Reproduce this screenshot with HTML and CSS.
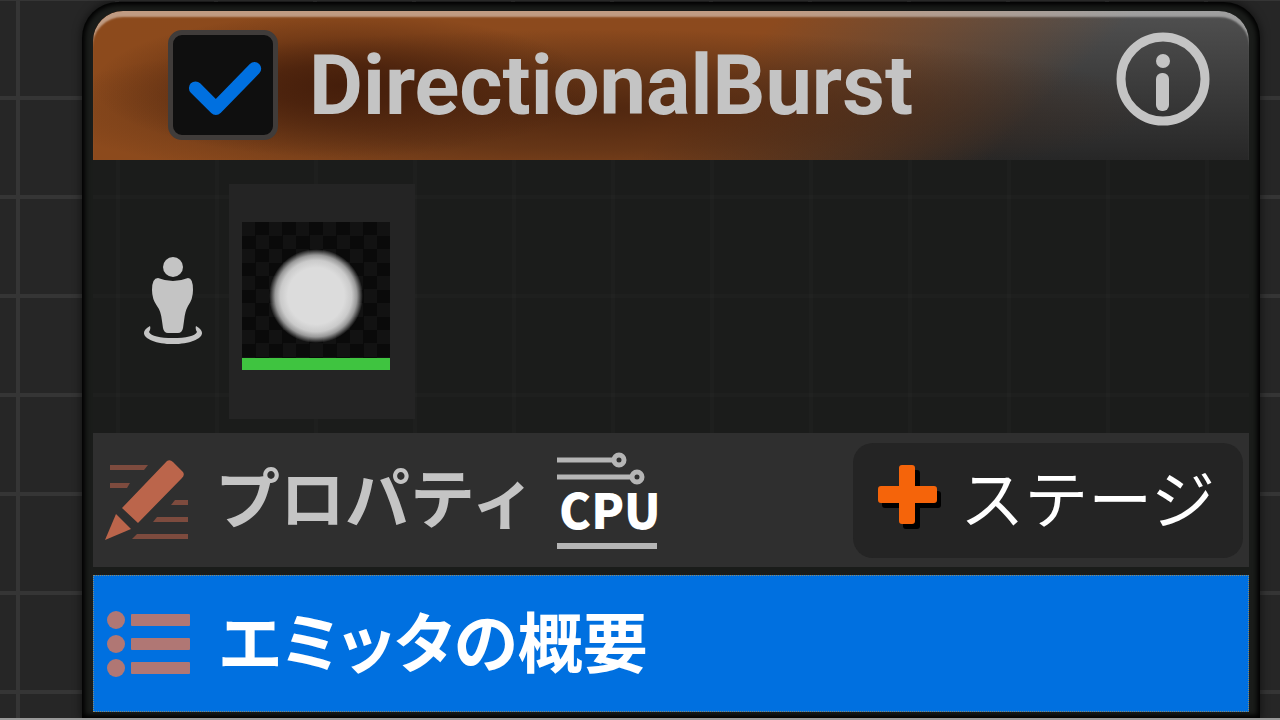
FILE: index.html
```html
<!DOCTYPE html>
<html lang="ja">
<head>
  <meta charset="UTF-8">
  <meta name="viewport" content="width=device-width, initial-scale=1.0">
  <title>DirectionalBurst</title>
  <link rel="stylesheet" href="styles.css">
</head>
<body>
  <main class="node">
    <!-- Emitter header -->
    <header class="node-header">
      <span class="toggle">
        <input type="checkbox" id="emitter-enabled" checked>
        <svg class="check" viewBox="0 0 108 108" aria-hidden="true">
          <path d="M27 57 L47 77 L85 38"/>
        </svg>
      </span>
      <h1><label for="emitter-enabled">DirectionalBurst</label></h1>
      <button class="info" aria-label="情報">
        <svg width="94" height="94" viewBox="0 0 94 94" aria-hidden="true">
          <circle cx="47" cy="47" r="42" fill="none" stroke="#c4c4c4" stroke-width="9"/>
          <circle cx="47" cy="29" r="7" fill="#c4c4c4"/>
          <rect x="40" y="41" width="13" height="38" rx="6" fill="#c4c4c4"/>
        </svg>
      </button>
    </header>

    <!-- Renderer preview -->
    <section class="preview">
      <svg class="person" width="60" height="90" viewBox="0 0 60 90" aria-hidden="true">
        <circle cx="30" cy="11" r="10"/>
        <path d="M15 22 Q30 28 45 22 Q50 22 50 34 Q50 43 45 50 Q42 55 41 65 L40 72 Q39 77 35 77 H25 Q21 77 20 72 L19 65 Q18 55 14 50 Q9 43 9 34 Q9 22 15 22 Z"/>
        <path d="M7 70 C-8 78 7 88 30 88 C53 88 68 78 53 70 Q52 73 54 76 C52 80 43 82 30 82 C17 82 8 80 6 76 Q8 73 7 70 Z"/>
      </svg>
      <div class="thumb-card">
        <div class="thumb">
          <div class="sprite"></div>
        </div>
      </div>
    </section>

    <!-- Properties row -->
    <section class="row properties">
      <svg class="row-icon" width="84" height="84" viewBox="0 0 84 84" aria-hidden="true">
        <g fill="#7d4b3e">
          <path d="M5 7 H43 L39 12 H5 Z"/>
          <path d="M5 25 H25 L22 30 H5 Z"/>
          <path d="M70 42 H83 V47 H66 Z"/>
          <path d="M52 59 H83 V64 H48 Z"/>
          <path d="M32 76 H83 V81 H27 Z"/>
        </g>
        <g fill="#bb654b">
          <path d="M62 3 Q65 1 68 4 L78 14 Q80 17 77 20 L33 65 L17 50 Z"/>
          <path d="M11 56 L26 71 L0 82 Z"/>
        </g>
      </svg>
      <h2>プロパティ</h2>
      <div class="cpu">
        <svg width="100" height="34" viewBox="0 0 100 34" fill="none" stroke="#b5b5b5" stroke-width="5" aria-hidden="true">
          <path d="M0 8 H58"/>
          <circle cx="62" cy="8" r="5"/>
          <path d="M0 25 H75"/>
          <circle cx="80" cy="25" r="5"/>
        </svg>
        <span>CPU</span>
      </div>
      <button class="stage">
        <svg width="66" height="66" viewBox="0 0 66 66" aria-hidden="true">
          <path fill="#000" d="M28 5 h11 q3 0 3 3 v18 h18 q3 0 3 3 v11 q0 3 -3 3 h-18 v18 q0 3 -3 3 h-11 q-3 0 -3 -3 v-18 h-18 q-3 0 -3 -3 v-11 q0 -3 3 -3 h18 v-18 q0 -3 3 -3 Z"/>
          <path fill="#f5640a" d="M24 0 h10 q3 0 3 3 v18 h19 q3 0 3 3 v11 q0 3 -3 3 h-19 v18 q0 3 -3 3 h-10 q-3 0 -3 -3 v-18 h-18 q-3 0 -3 -3 v-11 q0 -3 3 -3 h18 v-18 q0 -3 3 -3 Z"/>
        </svg>
        <span>ステージ</span>
      </button>
    </section>

    <!-- Selected row -->
    <button class="row summary">
      <svg class="row-icon" width="84" height="68" viewBox="0 0 84 68" fill="#b07774" aria-hidden="true">
        <circle cx="9" cy="10" r="9"/>
        <rect x="24" y="4" width="59" height="12" rx="1"/>
        <circle cx="9" cy="34" r="9"/>
        <rect x="24" y="28" width="59" height="12" rx="1"/>
        <circle cx="9" cy="58" r="9"/>
        <rect x="24" y="52" width="59" height="12" rx="1"/>
      </svg>
      <span>エミッタの概要</span>
    </button>
  </main>
</body>
</html>
```
FILE: styles.css
```css
/* General Styles */
* {
  box-sizing: border-box;
}

body {
  margin: 0;
  padding: 2px 20px 0 82px;
  border-bottom: 2px solid #999;
  font-family: "Noto Sans CJK JP", sans-serif;
  background-color: #262626;
  background-image:
    linear-gradient(#353535 4px, transparent 4px),
    linear-gradient(90deg, #353535 4px, transparent 4px);
  background-size: 99px 99px;
  background-position: 0 -3px, 16px 0;
}

h1,
h2 {
  margin: 0;
}

button {
  border: none;
  font-family: inherit;
  cursor: pointer;
}

svg {
  display: block;
  flex-shrink: 0;
}

/* Emitter Node */
.node {
  padding: 9px 11px 6px 11px;
  border-radius: 36px 36px 0 0;
  background-color: #1a1c1a;
  box-shadow: inset 0 0 5px 3px #000, 0 0 8px 1px rgba(0, 0, 0, 0.5);
}

/* Header */
.node-header {
  display: flex;
  align-items: flex-start;
  height: 149px;
  padding: 19px 39px 0 75px;
  border-radius: 30px 30px 0 0;
  background-image:
    radial-gradient(ellipse 250px 72px at 250px 50%, #451e0b 0%, rgba(69, 30, 11, 0.8) 30%, rgba(69, 30, 11, 0.3) 70%, rgba(69, 30, 11, 0) 100%),
    radial-gradient(ellipse 560px 80px at 500px 66%, rgba(65, 30, 12, 0.8) 0%, rgba(65, 34, 16, 0.5) 50%, rgba(60, 40, 25, 0) 100%),
    linear-gradient(135deg, #8c4a1c 0%, #8c4a1e 53%, rgba(140, 71, 30, 0) 80%),
    linear-gradient(#505050, #272727);
  box-shadow: inset 0 7px 2px -1px rgba(255, 255, 255, 0.45);
}

.toggle {
  display: grid;
  width: 110px;
  height: 110px;
}

.toggle input {
  grid-area: 1 / 1;
  appearance: none;
  width: 110px;
  height: 110px;
  margin: 0;
  border: 5px solid #403c3a;
  border-radius: 14px;
  background-color: #0f0f0f;
}

.check {
  grid-area: 1 / 1;
  fill: none;
  stroke: #0070e0;
  stroke-width: 13px;
  stroke-linecap: round;
  stroke-linejoin: round;
  visibility: hidden;
  pointer-events: none;
}

.toggle input:checked + .check {
  visibility: visible;
}

.node-header h1 {
  flex: 1;
  margin-left: 31px;
  font-family: Roboto, sans-serif;
  font-size: 83px;
  font-weight: 700;
  line-height: 112px;
  color: #c4c4c4;
}

.info {
  margin-top: 2px;
  padding: 0;
  background: none;
}

/* Preview */
.preview {
  display: flex;
  padding: 24px 50px 14px;
  background-color: #1b1c1b;
  background-image:
    linear-gradient(rgba(255, 255, 255, 0.012) 4px, transparent 4px),
    linear-gradient(90deg, rgba(255, 255, 255, 0.012) 4px, transparent 4px);
  background-size: 99px 99px;
  background-position: 0 35px, 23px 0;
}

.person {
  margin-top: 72px;
  fill: #c4c4c4;
}

.thumb-card {
  margin-left: 26px;
  padding: 38px 25px 49px 13px;
  background-color: #242424;
}

.thumb {
  display: grid;
  place-items: center;
  width: 148px;
  height: 148px;
  border-bottom: 12px solid #3fc440;
  background: repeating-conic-gradient(#0a0a0a 0% 25%, #121212 0% 50%) 0 0 / 27px 27px;
}

.sprite {
  width: 94px;
  height: 94px;
  margin-top: 11px;
  border-radius: 50%;
  background: radial-gradient(closest-side, #dcdcdc 60%, #cacaca 76%, #999 87%, transparent);
}

/* Rows */
.row {
  display: flex;
  align-items: center;
  width: 100%;
}

.row-icon {
  width: 84px;
}

.properties {
  height: 134px;
  padding: 0 6px 0 12px;
  background-color: #2f2f2f;
}

.properties h2 {
  margin-left: 26px;
  padding-bottom: 10px;
  font-size: 65px;
  font-weight: 700;
  line-height: 96px;
  color: #c4c4c4;
}

.cpu {
  width: 100px;
  margin-left: 21px;
  border-bottom: 6px solid #b5b5b5;
}

.cpu span {
  display: block;
  padding: 0 0 12px 2px;
  font-size: 48px;
  font-weight: 900;
  line-height: 45px;
  color: #fff;
}

.stage {
  display: flex;
  align-items: center;
  gap: 16px;
  height: 115px;
  margin-left: auto;
  padding: 0 28px 4px 25px;
  border-radius: 20px;
  background-color: #242424;
  font-size: 64px;
  line-height: 90px;
  color: #fff;
}

.stage span {
  padding-bottom: 6px;
}

.summary {
  height: 137px;
  margin-top: 8px;
  padding: 0 12px 0 13px;
  gap: 28px;
  border: 1px dotted #8a8a70;
  background-color: #0070e0;
  font-size: 65px;
  font-weight: 700;
  font-feature-settings: "palt";
  line-height: 96px;
  color: #fff;
}

.summary span {
  padding-bottom: 10px;
}
```
